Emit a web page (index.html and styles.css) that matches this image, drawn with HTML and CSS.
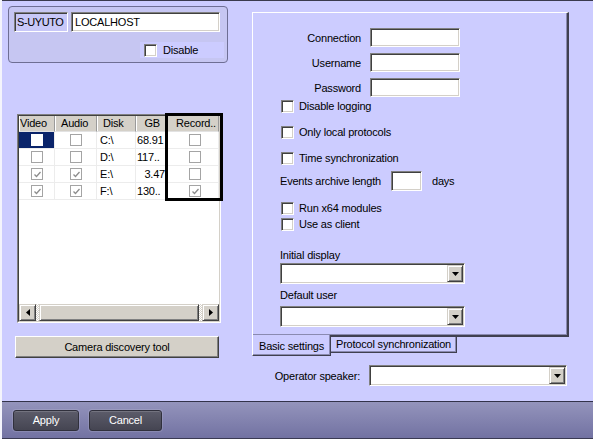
FILE: index.html
```html
<!DOCTYPE html>
<html>
<head>
	<title>Server settings</title>
	<link rel="stylesheet" href="styles.css">
</head>
<body>
<div class="window">
	<div class="main">
		<div class="left">
			<div class="server-box">
				<div class="server-row">
					<div class="server-id">S-UYUTO</div>
					<div class="edit host">LOCALHOST</div>
				</div>
				<div class="check disable-row"><span class="cb"></span>Disable</div>
			</div>

			<div class="disk-list">
				<div class="list-inner">
					<div class="list-row list-head">
						<div class="hd hd-video">Video</div>
						<div class="hd hd-audio">Audio</div>
						<div class="hd hd-disk">Disk</div>
						<div class="hd hd-gb">GB</div>
						<div class="hd hd-rec">Record..</div>
					</div>
					<div class="list-row">
						<div class="cell mid sel"><span class="tcb"></span></div>
						<div class="cell mid"><span class="tcb"></span></div>
						<div class="cell txt">C:\</div>
						<div class="cell gb">68.91</div>
						<div class="cell mid rec"><span class="tcb"></span></div>
					</div>
					<div class="list-row">
						<div class="cell mid"><span class="tcb"></span></div>
						<div class="cell mid"><span class="tcb"></span></div>
						<div class="cell txt">D:\</div>
						<div class="cell gb">117..</div>
						<div class="cell mid rec"><span class="tcb"></span></div>
					</div>
					<div class="list-row">
						<div class="cell mid"><span class="tcb on"><svg width="11" height="11"><path d="M2.5 5.5l2 2 4-4.5" fill="none" stroke="#8c8c8c" stroke-width="1.3"/></svg></span></div>
						<div class="cell mid"><span class="tcb on"><svg width="11" height="11"><path d="M2.5 5.5l2 2 4-4.5" fill="none" stroke="#8c8c8c" stroke-width="1.3"/></svg></span></div>
						<div class="cell txt">E:\</div>
						<div class="cell gb gb-right">3.47</div>
						<div class="cell mid rec"><span class="tcb"></span></div>
					</div>
					<div class="list-row">
						<div class="cell mid"><span class="tcb on"><svg width="11" height="11"><path d="M2.5 5.5l2 2 4-4.5" fill="none" stroke="#8c8c8c" stroke-width="1.3"/></svg></span></div>
						<div class="cell mid"><span class="tcb on"><svg width="11" height="11"><path d="M2.5 5.5l2 2 4-4.5" fill="none" stroke="#8c8c8c" stroke-width="1.3"/></svg></span></div>
						<div class="cell txt">F:\</div>
						<div class="cell gb">130..</div>
						<div class="cell mid rec"><span class="tcb on"><svg width="11" height="11"><path d="M2.5 5.5l2 2 4-4.5" fill="none" stroke="#8c8c8c" stroke-width="1.3"/></svg></span></div>
					</div>
					<div class="list-fill"></div>
					<div class="hscroll">
						<div class="sbtn"><svg width="4" height="7"><path d="M4 0v7L0 3.5z"/></svg></div>
						<div class="track">
							<div class="thumb"></div>
						</div>
						<div class="sbtn"><svg width="4" height="7"><path d="M0 0v7L4 3.5z"/></svg></div>
					</div>
				</div>
				<!-- highlight frame round the Record column -->
				<div class="record-frame"></div>
			</div>

			<div class="btn discovery">Camera discovery tool</div>
		</div>

		<div class="right">
			<div class="tab-page">
				<div class="form-grid">
					<div class="lbl">Connection</div>
					<div class="edit"></div>
					<div class="lbl">Username</div>
					<div class="edit"></div>
					<div class="lbl">Password</div>
					<div class="edit"></div>
				</div>
				<div class="check opt-logging"><span class="cb"></span>Disable logging</div>
				<div class="check opt-gap"><span class="cb"></span>Only local protocols</div>
				<div class="check opt-gap"><span class="cb"></span>Time synchronization</div>
				<div class="archive-row">
					Events archive length
					<div class="edit days-edit"></div>
					days
				</div>
				<div class="check opt-x64"><span class="cb"></span>Run x64 modules</div>
				<div class="check"><span class="cb"></span>Use as client</div>
				<div class="field-lbl first-lbl">Initial display</div>
				<div class="combo combo-first">
					<div class="combo-btn"><svg width="7" height="4"><path d="M0 0h7L3.5 4z"/></svg></div>
				</div>
				<div class="field-lbl">Default user</div>
				<div class="combo">
					<div class="combo-btn"><svg width="7" height="4"><path d="M0 0h7L3.5 4z"/></svg></div>
				</div>
			</div>
			<div class="tabs">
				<div class="tab tab-active">Basic settings</div>
				<div class="tab">Protocol synchronization</div>
			</div>
			<div class="speaker-row">
				<div class="speaker-lbl">Operator speaker:</div>
				<div class="combo speaker-combo">
					<div class="combo-btn"><svg width="7" height="4"><path d="M0 0h7L3.5 4z"/></svg></div>
				</div>
			</div>
		</div>
	</div>

	<div class="bottom-bar">
		<div class="bar-btn apply">Apply</div>
		<div class="bar-btn cancel">Cancel</div>
	</div>
</div>
</body>
</html>
```

FILE: styles.css
```css
body {
	margin: 0;
	font-family: "Liberation Sans", Arial, sans-serif;
	font-size: 11px;
	letter-spacing: -0.2px;
	color: #000;
	background: #ccccff;
}
.window {
	width: 593px;
	height: 439px;
	box-sizing: border-box;
	border-left: 2px solid #f4f4fc;
	overflow: hidden;
}
.main {
	height: 401px;
	box-sizing: border-box;
	border-top: 1px solid #3a3a4e;
	display: flex;
}
.left {
	width: 250px;
}
.right {
	flex: 1;
}

/* sunken white field */
.edit {
	box-sizing: border-box;
	height: 19px;
	background: #fff;
	border: 1px solid;
	border-color: #808080 #fff #fff #808080;
	box-shadow: inset 1px 1px #404040, inset -1px -1px #d4d0c8;
	padding: 2px 3px;
	line-height: 13px;
}
.cb {
	box-sizing: border-box;
	width: 13px;
	height: 13px;
	background: #fff;
	border: 1px solid;
	border-color: #808080 #fff #fff #808080;
	box-shadow: inset 1px 1px #404040, inset -1px -1px #d4d0c8;
	flex: none;
}
.check {
	display: flex;
	align-items: center;
	gap: 5px;
	height: 16px;
	margin-left: 1px;
}

/* server box */
.server-box {
	box-sizing: border-box;
	margin: 5px 0 0 6px;
	width: 220px;
	height: 57px;
	border: 1px solid #6e6e94;
	border-radius: 4px;
	background: #c6c6f2;
	padding: 5px 0 0 5px;
}
.server-row {
	display: flex;
	gap: 3px;
}
.server-id {
	box-sizing: border-box;
	width: 54px;
	height: 20px;
	border: 1px solid;
	border-color: #808080 #fff #fff #808080;
	box-shadow: inset 1px 1px #404040;
	background: #c8c8f8;
	padding: 3px 0 0 2px;
	line-height: 13px;
	letter-spacing: -0.4px;
	white-space: nowrap;
	overflow: hidden;
}
.host {
	width: 149px;
	height: 20px;
	padding-top: 3px;
}
.disable-row {
	width: 80px;
	margin: 10px 0 0 126px;
	padding-left: 4px;
	gap: 6px;
	background: #ccccff;
}

/* disk list */
.disk-list {
	position: relative;
	margin: 51px 0 0 15px;
	width: 204px;
	height: 209px;
	box-sizing: border-box;
	border: 1px solid;
	border-color: #808080 #fff #fff #808080;
}
.list-inner {
	height: 100%;
	box-sizing: border-box;
	border: 1px solid;
	border-color: #404040 #d4d0c8 #d4d0c8 #404040;
	background: #fff;
	display: flex;
	flex-direction: column;
}
.list-row {
	display: grid;
	grid-template-columns: 36px 42px 39px 30px 53px;
	height: 17px;
}
.list-head {
	height: 16px;
}
.hd {
	box-sizing: border-box;
	background: #d4d0c8;
	border-right: 1px solid #9a9a9a;
	border-bottom: 1px solid #e2e2e2;
	box-shadow: inset 1px 0 #fff;
	line-height: 15px;
	padding-left: 6px;
	white-space: nowrap;
	overflow: hidden;
}
.hd-video {
	padding-left: 1px;
}
.hd-gb {
	text-align: right;
	padding: 0 5px 0 0;
}
.hd-rec {
	padding-left: 10px;
}
.cell {
	box-sizing: border-box;
	border-right: 1px solid #ececec;
	border-bottom: 1px solid #ececec;
	line-height: 16px;
	white-space: nowrap;
	overflow: hidden;
}
.mid {
	display: flex;
	align-items: center;
	justify-content: center;
}
.sel {
	background: #0a246a;
}
.sel .tcb {
	border-color: #fff;
}
.rec {
	padding-left: 5px;
}
.txt {
	padding-left: 3px;
}
.gb {
	padding-left: 1px;
}
.gb-right {
	text-align: right;
	padding: 0;
}
.tcb {
	box-sizing: border-box;
	width: 12px;
	height: 12px;
	border: 1px solid #a4a4a4;
	background: #fff;
	display: flex;
}
.list-fill {
	flex: 1;
}
.hscroll {
	display: flex;
	height: 17px;
}
.sbtn {
	box-sizing: border-box;
	width: 17px;
	height: 17px;
	background: #d4d0c8;
	border: 1px solid;
	border-color: #d4d0c8 #404040 #404040 #d4d0c8;
	box-shadow: inset 1px 1px #fff, inset -1px -1px #808080;
	display: flex;
	align-items: center;
	justify-content: center;
}
.track {
	flex: 1;
	padding: 0 3px;
	background: repeating-conic-gradient(#fff 0 25%, #d4d0c8 0 50%) 0 0 / 2px 2px;
}
.thumb {
	box-sizing: border-box;
	height: 17px;
	background: #d4d0c8;
	border: 1px solid;
	border-color: #d4d0c8 #404040 #404040 #d4d0c8;
	box-shadow: inset 1px 1px #fff, inset -1px -1px #808080;
}
.record-frame {
	position: absolute;
	left: 147px;
	top: -2px;
	width: 58px;
	height: 88px;
	box-sizing: border-box;
	border: 3px solid #000;
}

.btn {
	box-sizing: border-box;
	background: #d4d0c8;
	border: 1px solid;
	border-color: #fff #404040 #404040 #fff;
	box-shadow: inset -1px -1px #808080;
	text-align: center;
}
.discovery {
	margin: 13px 0 0 13px;
	width: 204px;
	height: 22px;
	line-height: 20px;
}

/* right side */
.tab-page {
	box-sizing: border-box;
	margin-top: 11px;
	width: 317px;
	height: 325px;
	border-top: 1px solid #fff;
	border-left: 1px solid #fff;
	border-right: 2px solid #404050;
	border-bottom: 2px solid #404050;
	box-shadow: inset -1px -1px #8a8ab0;
	padding-left: 27px;
}
.form-grid {
	display: grid;
	grid-template-columns: 81px 90px;
	grid-auto-rows: 19px;
	column-gap: 9px;
	row-gap: 6px;
	margin-top: 15px;
}
.lbl {
	text-align: right;
	line-height: 20px;
}
.opt-logging {
	margin-top: 1px;
}
.opt-gap {
	margin-top: 10px;
}
.archive-row {
	display: flex;
	align-items: center;
	margin-top: 5px;
	height: 20px;
}
.days-edit {
	width: 31px;
	height: 20px;
	margin: 0 10px 0 10px;
}
.opt-x64 {
	margin-top: 9px;
}
.field-lbl {
	line-height: 14px;
	margin-top: 4px;
}
.first-lbl {
	margin-top: 16px;
}
.combo {
	box-sizing: border-box;
	width: 185px;
	height: 21px;
	margin-top: 4px;
	background: #fff;
	border: 1px solid;
	border-color: #808080 #fff #fff #808080;
	box-shadow: inset 1px 1px #404040, inset -1px -1px #d4d0c8;
	padding: 1px;
	display: flex;
	justify-content: flex-end;
}
.combo-first {
	margin-top: 1px;
}
.combo-btn {
	box-sizing: border-box;
	width: 16px;
	height: 17px;
	background: #d4d0c8;
	border: 1px solid;
	border-color: #d4d0c8 #404040 #404040 #d4d0c8;
	box-shadow: inset 1px 1px #fff, inset -1px -1px #808080;
	display: flex;
	align-items: center;
	justify-content: center;
}

.tabs {
	display: flex;
	align-items: flex-start;
}
.tab {
	box-sizing: border-box;
	height: 16px;
	width: 126px;
	border-right: 1px solid #404050;
	border-bottom: 1px solid #404050;
	box-shadow: inset -1px -1px #8a8ab0;
	padding-left: 5px;
	line-height: 15px;
	white-space: nowrap;
}
.tab-active {
	position: relative;
	margin-top: -2px;
	height: 21px;
	width: 79px;
	background: #ccccff;
	border-left: 1px solid #fff;
	padding: 4px 0 0 6px;
}

.speaker-row {
	display: flex;
	align-items: center;
	gap: 9px;
	margin-top: 9px;
}
.speaker-lbl {
	width: 108px;
	text-align: right;
}
.speaker-combo {
	width: 198px;
	margin-top: 0;
}

/* bottom bar */
.bottom-bar {
	height: 38px;
	box-sizing: border-box;
	border-top: 1px solid #33334a;
	border-bottom: 1px solid #3a3a52;
	background: linear-gradient(#9494bc, #7272a2);
	display: flex;
	gap: 10px;
	padding: 8px 0 0 11px;
}
.bar-btn {
	box-sizing: border-box;
	height: 21px;
	border: 1px solid #30303c;
	border-radius: 3px;
	background: linear-gradient(#5c5c6a, #454552);
	box-shadow: 0 0 0 1px rgba(255, 255, 255, 0.12), inset 0 1px rgba(255, 255, 255, 0.15);
	color: #fff;
	text-align: center;
	line-height: 19px;
}
.apply {
	width: 66px;
}
.cancel {
	width: 73px;
}
```
